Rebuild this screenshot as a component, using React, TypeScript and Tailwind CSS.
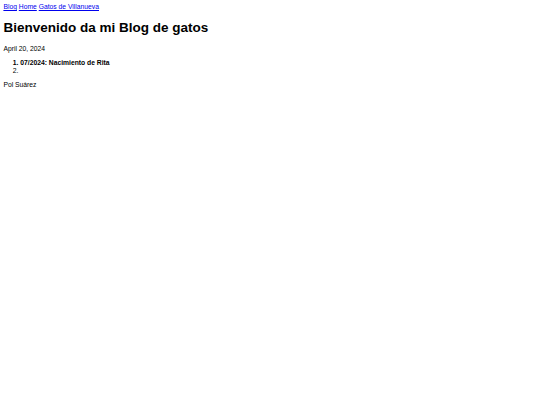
export default function App() {
  return (
    <div className="min-h-screen bg-white px-[3.4px] pt-[3.2px] font-['Liberation_Sans',Arial,sans-serif] text-[6.75px] leading-[8px] text-black">
      {/* Nav */}
      <div>
        <a href="#" className="text-[#0000ee] underline">Blog</a>{" "}
        <a href="#" className="text-[#0000ee] underline">Home</a>{" "}
        <a href="#" className="text-[#0000ee] underline">Gatos de Villanueva</a>
      </div>

      <h1 className="my-[8.7px] text-[13.5px] font-bold leading-[16px]">Bienvenido da mi Blog de gatos</h1>

      <p className="my-[6px]">April 20, 2024</p>

      <ol className="my-[6px] list-decimal pl-[16.9px]">
        <li className="font-bold">07/2024: Nacimiento de Rita</li>
        <li></li>
      </ol>

      <p className="my-[6px]">Pol Suárez</p>
    </div>
  );
}
